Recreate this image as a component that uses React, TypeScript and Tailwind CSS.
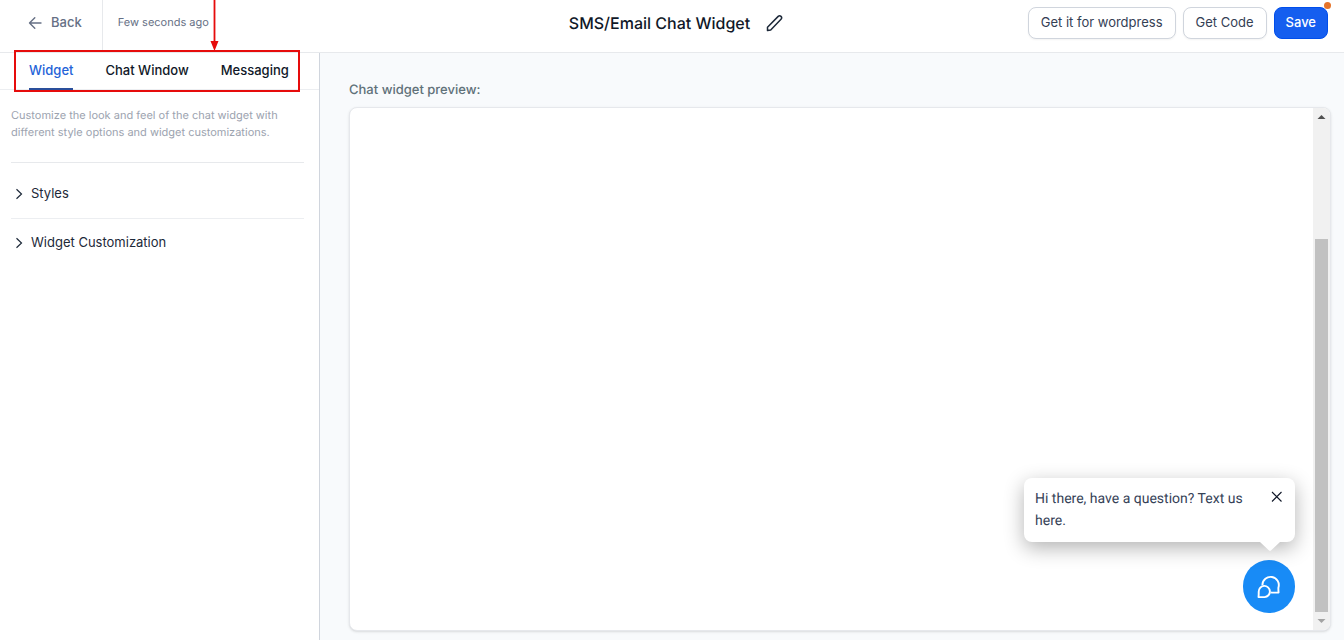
import { useState } from 'react'

const TABS = ['Widget', 'Chat Window', 'Messaging']
const SECTIONS = ['Styles', 'Widget Customization']

function Header() {
  return (
    <header className="grid h-[53px] shrink-0 grid-cols-[1fr_auto_1fr] items-stretch border-b border-[#e7e9ec] bg-white pr-4 pl-6">
      <div className="flex">
        <div className="flex items-center border-r border-[#e7e9ec] pr-5 pb-1.5 pl-1">
          <button type="button" className="flex items-center gap-2 text-[13px] font-medium text-[#667085]">
            <svg width="15" height="14" viewBox="0 0 15 14" fill="none" stroke="currentColor" strokeWidth="1.4" strokeLinecap="round" strokeLinejoin="round">
              <path d="M13 7H1.5M6.8 1.7 1.5 7l5.3 5.3" />
            </svg>
            Back
          </button>
        </div>
        <span className="flex items-center pb-2 pl-[15px] text-[11px] text-[#667085]">Few seconds ago</span>
      </div>

      <div className="flex items-center gap-4 pb-1.5">
        <h1 className="text-base font-medium text-[#101828]">SMS/Email Chat Widget</h1>
        <button type="button" aria-label="Rename widget" className="text-[#1d2939]">
          <svg width="17" height="18" viewBox="0 0 17 18" fill="none" stroke="currentColor" strokeWidth="1.5" strokeLinejoin="round">
            <path d="M1.500 16.500v-3.200L12.200 2.400a2 2 0 0 1 2.800 0 2 2 0 0 1 0 2.800L4.700 15.900z" />
          </svg>
        </button>
      </div>

      <div className="flex items-center justify-end gap-[7px] pb-1.5 text-[13px]">
        <button type="button" className="h-8 rounded-lg border border-[#d0d5dd] bg-white px-3 text-[#344054] shadow-xs">
          Get it for wordpress
        </button>
        <button type="button" className="h-8 rounded-lg border border-[#d0d5dd] bg-white px-3 text-[#344054] shadow-xs">
          Get Code
        </button>
        <button type="button" className="relative h-8 rounded-lg border border-[#004eeb] bg-[#155eef] px-[11px] font-medium text-white">
          Save
          {/* unsaved changes */}
          <span className="absolute -top-1.5 -right-1 size-[7px] rounded-full bg-[#e6742a]" />
        </button>
      </div>
    </header>
  )
}

function Sidebar() {
  const [active, setActive] = useState('Widget')

  return (
    <aside className="w-80 shrink-0 border-r border-[#d0d5dd] bg-white">
      <nav className="relative flex h-[37px] gap-8 border-b border-[#eceef1] pl-[29px] text-[13px] font-medium whitespace-nowrap">
        {TABS.map(tab => (
          <button
            key={tab}
            type="button"
            onClick={() => setActive(tab)}
            className={`-mb-px border-b-2 ${tab === active ? 'border-[#2a4f9b] text-[#2563d8]' : 'border-transparent text-[#101828]'}`}
          >
            {tab}
          </button>
        ))}

        {/* Callout around the tabs */}
        <div className="pointer-events-none absolute -top-[3px] left-3.5 h-[42px] w-[286px] border-2 border-[#e60c0c]" />
        <svg className="pointer-events-none absolute -top-[53px] left-[210px]" width="9" height="51" viewBox="0 0 9 51" fill="#e60c0c">
          <path d="M3.6 0h1.8v41H8.5L4.5 51 .5 41h3.1z" />
        </svg>
      </nav>

      <div className="pr-[15px] pl-[11px]">
        <p className="border-b border-[#e7e9ec] pt-[17px] pb-[21px] text-[11px] leading-[17px] text-[#9ca3af]">
          Customize the look and feel of the chat widget with different style options and widget customizations.
        </p>
        {SECTIONS.map(section => (
          <div key={section} className="border-b border-[#eceef1] pt-[7px] last:border-0 last:pt-0">
            <button type="button" className="flex h-12 w-full items-center gap-2 pl-1 text-[13px] text-[#1d2939]">
              <svg width="8" height="12" viewBox="0 0 8 12" fill="none" stroke="currentColor" strokeWidth="1.2">
                <path d="m1.5 1.2 5 4.8-5 4.8" />
              </svg>
              {section}
            </button>
          </div>
        ))}
      </div>
    </aside>
  )
}

function Scrollbar() {
  return (
    <div className="flex w-[17px] shrink-0 flex-col items-center bg-[#f1f1f1]">
      <svg width="17" height="17" viewBox="0 0 17 17" fill="#505050">
        <path d="M4.5 11h8l-4-4z" />
      </svg>
      <div className="w-[13px] grow-[114]" />
      <div className="w-[13px] grow-[373] bg-[#c1c1c1]" />
      <svg width="17" height="18" viewBox="0 0 17 18" fill="#a3a3a3">
        <path d="M4.5 7h8l-4 4z" />
      </svg>
    </div>
  )
}

function ChatPrompt() {
  const [open, setOpen] = useState(true)

  return (
    <div className="absolute right-[35px] bottom-[17px] flex flex-col items-end gap-[18px] font-[Roboto,sans-serif]">
      {open && (
        <div className="relative flex h-16 w-[271px] items-start justify-between rounded-lg bg-white pt-2.5 pr-3 pl-[11px] shadow-[0_6px_20px_rgba(0,0,0,0.3)]">
          <p className="w-[220px] text-sm leading-[22px] text-[#364257]">Hi there, have a question? Text us here.</p>
          <button type="button" aria-label="Close" onClick={() => setOpen(false)} className="mt-[3px] text-[#101828]">
            <svg width="12" height="12" viewBox="0 0 12 12" fill="none" stroke="currentColor" strokeWidth="1.1">
              <path d="m1 1 9.500 9.500m0-9.500-9.500 9.500" />
            </svg>
          </button>
          <svg className="absolute top-full right-[15px]" width="20" height="9" viewBox="0 0 20 9" fill="#ffffff">
            <path d="M0 0h20l-8.5 8a2 2 0 0 1-3 0z" />
          </svg>
        </div>
      )}
      <button type="button" aria-label="Open chat" className="flex h-[53px] w-[52px] items-center justify-center rounded-full bg-[#188bf6] text-white">
        <svg width="24" height="24" viewBox="0 0 24 24" fill="none" stroke="currentColor" strokeWidth="1.9" strokeLinejoin="round">
          <path d="M5.4 9.9A8.2 8.2 0 1 1 21.4 12.600c-.1 1.500 0 3 .2 4.900-2 .1-3.800.1-5.800.1-.8 0-1.500-.1-2.200-.3" />
          <path d="M1.500 22.100c.3-1.900.2-3.300.2-5.300a5.600 5.600 0 1 1 5.900 5.300z" />
        </svg>
      </button>
    </div>
  )
}

export default function App() {
  return (
    <div className="flex h-screen flex-col overflow-hidden bg-[#f9fafb] font-[Inter,sans-serif] [text-rendering:geometricPrecision]">
      <Header />
      <div className="flex min-h-0 flex-1">
        <Sidebar />
        <main className="flex min-w-0 flex-1 flex-col bg-[#f8fafc] pt-[27px] pr-[13px] pb-[9px] pl-[29px]">
          <h2 className="mb-[7px] text-[13px] leading-5 font-medium text-[#607179]">Chat widget preview:</h2>
          <div className="relative flex flex-1 justify-end overflow-hidden rounded-lg border border-[#e6e8ec] bg-white shadow-sm">
            <Scrollbar />
            <ChatPrompt />
          </div>
        </main>
      </div>
    </div>
  )
}
